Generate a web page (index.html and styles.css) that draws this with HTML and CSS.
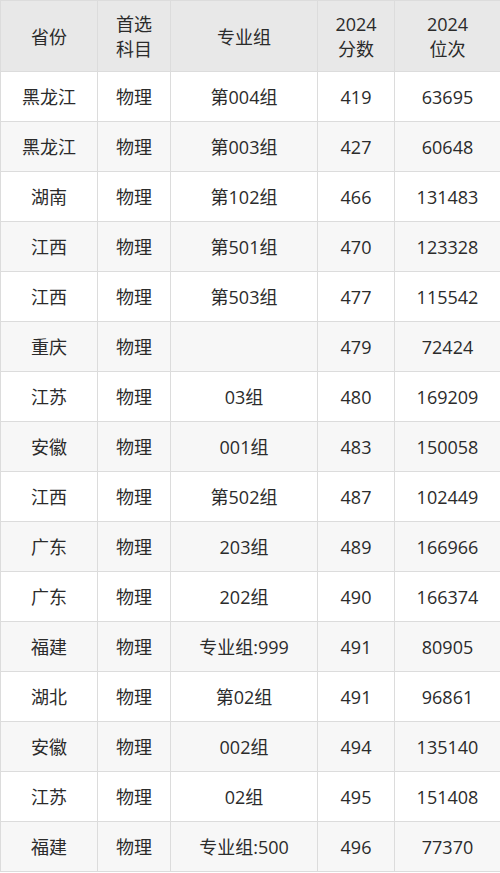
FILE: index.html
```html
<!DOCTYPE html>
<html lang="zh-CN">
<head>
<meta charset="utf-8">
<link rel="stylesheet" href="styles.css">
</head>
<body>
<table class="score-table">
  <colgroup>
    <col class="c1"><col class="c2"><col class="c3"><col class="c4"><col class="c5">
  </colgroup>
  <thead>
    <tr><th>省份</th><th>首选<br>科目</th><th>专业组</th><th>2024<br>分数</th><th>2024<br>位次</th></tr>
  </thead>
  <tbody>
    <tr><td>黑龙江</td><td>物理</td><td>第004组</td><td>419</td><td>63695</td></tr>
    <tr><td>黑龙江</td><td>物理</td><td>第003组</td><td>427</td><td>60648</td></tr>
    <tr><td>湖南</td><td>物理</td><td>第102组</td><td>466</td><td>131483</td></tr>
    <tr><td>江西</td><td>物理</td><td>第501组</td><td>470</td><td>123328</td></tr>
    <tr><td>江西</td><td>物理</td><td>第503组</td><td>477</td><td>115542</td></tr>
    <tr><td>重庆</td><td>物理</td><td></td><td>479</td><td>72424</td></tr>
    <tr><td>江苏</td><td>物理</td><td>03组</td><td>480</td><td>169209</td></tr>
    <tr><td>安徽</td><td>物理</td><td>001组</td><td>483</td><td>150058</td></tr>
    <tr><td>江西</td><td>物理</td><td>第502组</td><td>487</td><td>102449</td></tr>
    <tr><td>广东</td><td>物理</td><td>203组</td><td>489</td><td>166966</td></tr>
    <tr><td>广东</td><td>物理</td><td>202组</td><td>490</td><td>166374</td></tr>
    <tr><td>福建</td><td>物理</td><td>专业组:999</td><td>491</td><td>80905</td></tr>
    <tr><td>湖北</td><td>物理</td><td>第02组</td><td>491</td><td>96861</td></tr>
    <tr><td>安徽</td><td>物理</td><td>002组</td><td>494</td><td>135140</td></tr>
    <tr><td>江苏</td><td>物理</td><td>02组</td><td>495</td><td>151408</td></tr>
    <tr><td>福建</td><td>物理</td><td>专业组:500</td><td>496</td><td>77370</td></tr>
  </tbody>
</table>
</body>
</html>
```

FILE: styles.css
```css
html, body {
  margin: 0;
  padding: 0;
  background: #ffffff;
}
body {
  font-family: "Open Sans", "Noto Sans CJK SC", sans-serif;
  color: #2b2b2b;
}
.score-table {
  width: 500px;
  table-layout: fixed;
  border-collapse: collapse;
  font-size: 18px;
}
.c1 { width: 97px; }
.c2 { width: 73px; }
.c3 { width: 147px; }
.c4 { width: 77px; }
.c5 { width: 106px; }
.score-table th,
.score-table td {
  border: 1px solid #dcdcdc;
  text-align: center;
  vertical-align: middle;
  padding: 0;
}
.score-table th {
  height: 68px;
  background: #e8e8e8;
  font-weight: normal;
  line-height: 25px;
  padding-top: 2px;
}
.score-table td {
  height: 49px;
  line-height: 24px;
}
.score-table tbody tr:nth-child(even) td {
  background: #f7f7f7;
}
```
